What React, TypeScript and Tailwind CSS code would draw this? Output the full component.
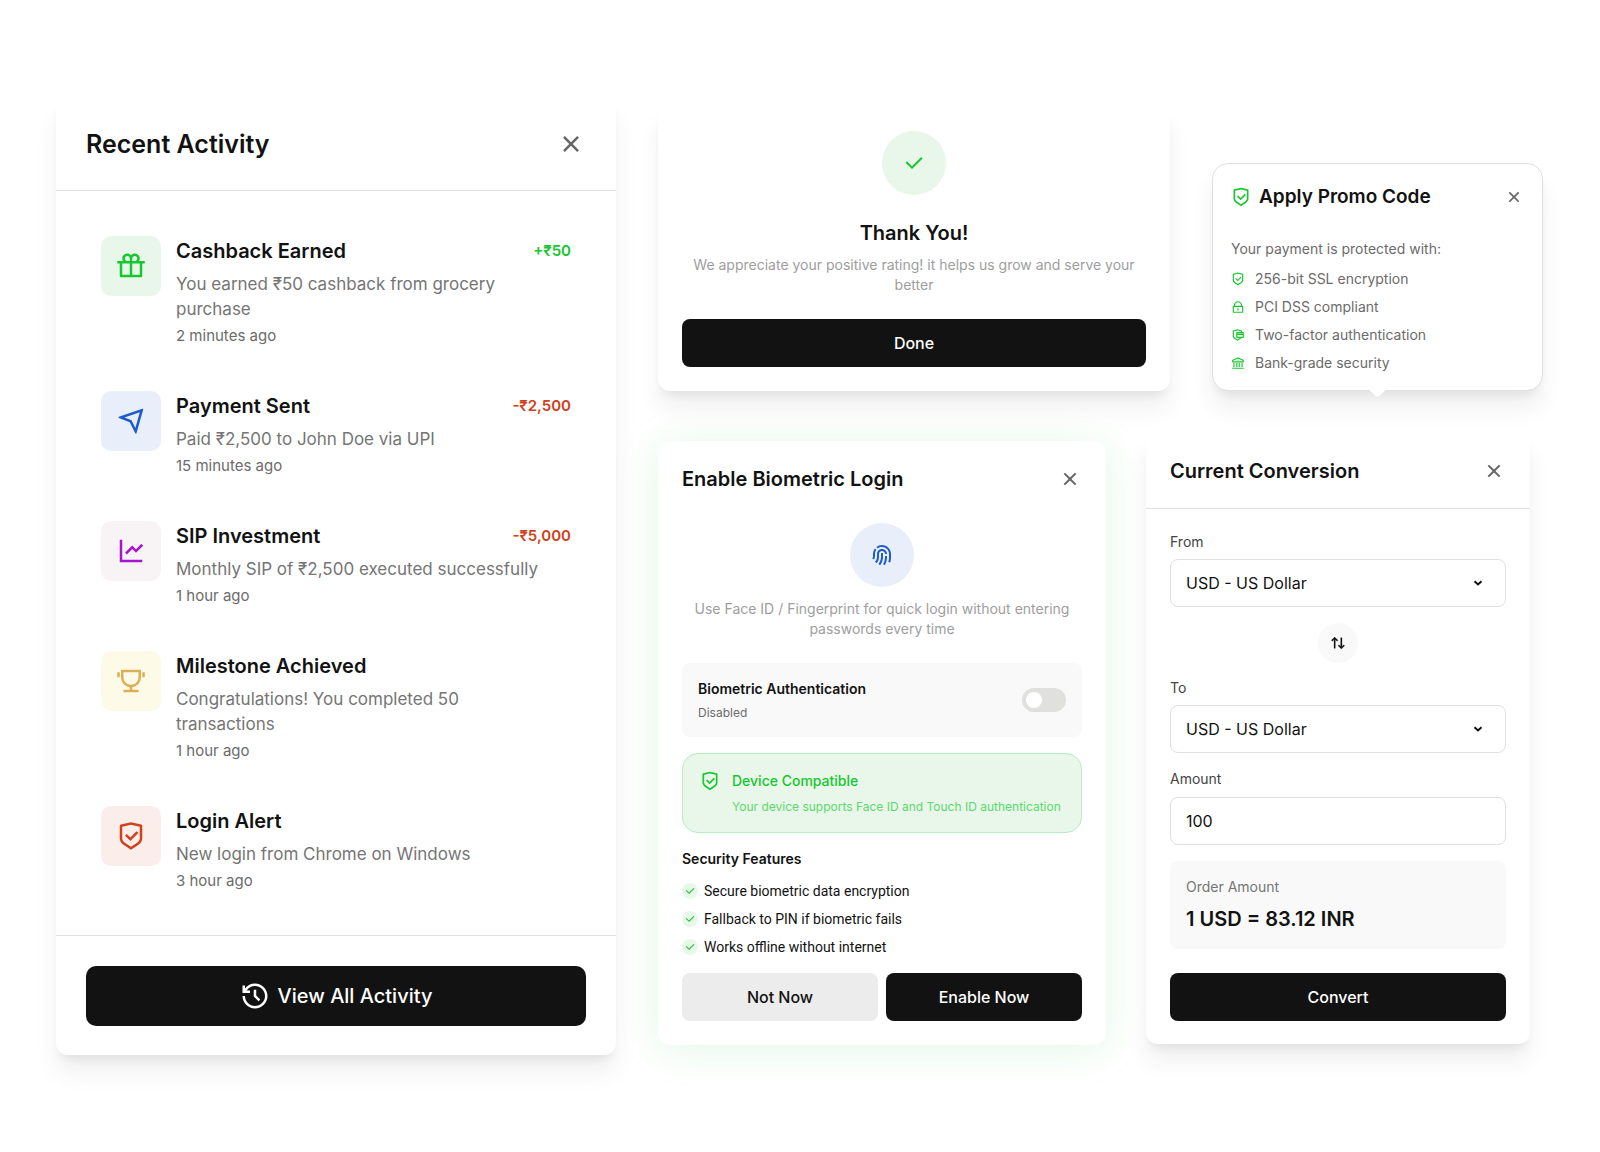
import React, { useState } from "react";
import {
    RiArrowUpDownLine,
    RiBankLine,
    RiCheckLine,
    RiCloseLine,
    RiFingerprintLine,
    RiGiftLine,
    RiHistoryLine,
    RiLineChartLine,
    RiLockLine,
    RiNavigationLine,
    RiSecurePaymentLine,
    RiShieldCheckLine,
    RiTrophyLine,
} from "react-icons/ri";

const activities = [
    {
        title: "Cashback Earned",
        text: "You earned ₹50 cashback from grocery purchase",
        time: "2 minutes ago",
        amount: "+₹50",
        amountColor: "text-[#16c72e]",
        tile: "bg-[#e8f7ea] text-[#16c72e]",
        Icon: RiGiftLine,
    },
    {
        title: "Payment Sent",
        text: "Paid ₹2,500 to John Doe via UPI",
        time: "15 minutes ago",
        amount: "-₹2,500",
        amountColor: "text-[#d0401b]",
        tile: "bg-[#e8effb] text-[#1f5acb] -scale-x-100",
        Icon: RiNavigationLine,
    },
    {
        title: "SIP Investment",
        text: "Monthly SIP of ₹2,500 executed successfully",
        time: "1 hour ago",
        amount: "-₹5,000",
        amountColor: "text-[#d0401b]",
        tile: "bg-[#f8f4f6] text-[#a516d0]",
        Icon: RiLineChartLine,
    },
    {
        title: "Milestone Achieved",
        text: "Congratulations! You completed 50 transactions",
        time: "1 hour ago",
        tile: "bg-[#fdfbe7] text-[#dcae55]",
        Icon: RiTrophyLine,
    },
    {
        title: "Login Alert",
        text: "New login from Chrome on Windows",
        time: "3 hour ago",
        tile: "bg-[#fbede9] text-[#d0401b]",
        Icon: RiShieldCheckLine,
    },
];

const protections = [
    { label: "256-bit SSL encryption", Icon: RiShieldCheckLine },
    { label: "PCI DSS compliant", Icon: RiLockLine },
    { label: "Two-factor authentication", Icon: RiSecurePaymentLine },
    { label: "Bank-grade security", Icon: RiBankLine },
];

const features = [
    "Secure biometric data encryption",
    "Fallback to PIN if biometric fails",
    "Works offline without internet",
];

const cardShadow = "shadow-[0_18px_24px_rgba(0,0,0,0.06),0_8px_10px_-4px_rgba(0,0,0,0.07)]";
const darkButton = "h-12 rounded-lg bg-[#121212] text-base font-medium text-white";

function RecentActivity() {
    return (
        <section className={`min-w-0 rounded-xl bg-white ${cardShadow}`}>
            <header className="flex items-center justify-between border-b border-[#e0e0e0] p-[30px]">
                <h2 className="text-[25px] leading-8 font-semibold">Recent Activity</h2>
                <button aria-label="Close" className="text-[#666666]">
                    <RiCloseLine className="size-[30px]" />
                </button>
            </header>

            <ul className="flex flex-col gap-[15px] p-[30px] pb-[29px]">
                {activities.map(({ title, text, time, amount, amountColor, tile, Icon }) => (
                    <li key={title} className="flex items-start gap-[15px] p-[15px]">
                        <div className={`flex size-[60px] shrink-0 items-center justify-center rounded-[10px] ${tile}`}>
                            <Icon className="size-[30px]" />
                        </div>
                        <div className="min-w-0 flex-1">
                            <div className="flex items-center justify-between">
                                <h3 className="text-xl leading-[30px] font-semibold">{title}</h3>
                                {amount && (
                                    <span className={`text-[15px] leading-5 font-semibold ${amountColor}`}>{amount}</span>
                                )}
                            </div>
                            <p className="mt-1.5 max-w-[370px] text-[17px] leading-[25px] text-[#757575]">{text}</p>
                            <p className="mt-1 text-[15px] leading-5 text-[#6b6b6b]">{time}</p>
                        </div>
                    </li>
                ))}
            </ul>

            <footer className="border-t border-[#e0e0e0] p-[30px] pb-[29px]">
                <button className="flex h-[60px] w-full items-center justify-center gap-2 rounded-[10px] bg-[#121212] text-xl font-medium text-white">
                    <RiHistoryLine className="size-[30px]" />
                    View All Activity
                </button>
            </footer>
        </section>
    );
}

function ThankYou() {
    return (
        <section className={`flex min-w-0 flex-col items-center rounded-xl bg-white p-6 text-center ${cardShadow}`}>
            <div className="flex size-16 items-center justify-center rounded-full bg-[#e8f7ea] text-[#16c72e]">
                <RiCheckLine className="size-6" />
            </div>
            <h2 className="mt-6 text-xl leading-7 font-semibold">Thank You!</h2>
            <p className="mt-2 text-sm leading-5 text-[#9e9e9e]">
                We appreciate your positive rating! it helps us grow and serve your better
            </p>
            <button className={`mt-6 w-full ${darkButton}`}>Done</button>
        </section>
    );
}

function PromoCode() {
    return (
        <section className={`relative min-w-0 rounded-2xl border border-[#e0e0e0] bg-white px-[18px] pt-[19px] pb-[17px] ${cardShadow}`}>
            <header className="flex items-center">
                <RiShieldCheckLine className="size-5 text-[#16c72e]" />
                <h2 className="ml-2 flex-1 text-[19px] leading-7 font-semibold">Apply Promo Code</h2>
                <button aria-label="Close" className="text-[#666666]">
                    <RiCloseLine className="size-5" />
                </button>
            </header>
            <p className="mt-7 text-sm leading-5 text-[#6b6b6b]">Your payment is protected with:</p>
            <ul className="mt-[10px] flex flex-col gap-2">
                {protections.map(({ label, Icon }) => (
                    <li key={label} className="flex items-center gap-2.5 text-sm leading-5 text-[#6b6b6b]">
                        <Icon className="size-3.5 text-[#16c72e]" />
                        {label}
                    </li>
                ))}
            </ul>
            {/* Tooltip pointer */}
            <svg className="absolute top-full left-1/2 -mt-px h-2 w-5 -translate-x-1/2" viewBox="0 0 20 8" fill="white">
                <path d="M0 0h19l-8.300 7.400a2 2 0 0 1-2.400 0z" />
            </svg>
        </section>
    );
}

function BiometricLogin() {
    const [enabled, setEnabled] = useState(false);

    return (
        <section className="mt-2 min-w-0 rounded-xl bg-white p-6 shadow-[0_4px_40px_rgba(22,199,46,0.13)]">
            <header className="flex items-center justify-between">
                <h2 className="text-xl leading-7 font-semibold">Enable Biometric Login</h2>
                <button aria-label="Close" className="text-[#666666]">
                    <RiCloseLine className="size-6" />
                </button>
            </header>

            <div className="mt-[30px] flex flex-col items-center">
                <div className="flex size-16 items-center justify-center rounded-full bg-[#e8effb] text-[#1f5acb]">
                    <RiFingerprintLine className="size-6" />
                </div>
                <p className="mt-3 text-center text-sm leading-5 text-[#9e9e9e]">
                    Use Face ID / Fingerprint for quick login without entering passwords every time
                </p>
            </div>

            <div className="mt-6 flex items-center justify-between rounded-lg bg-[#f9f9f9] p-4">
                <div>
                    <label htmlFor="biometric" className="block text-sm leading-5 font-semibold">
                        Biometric Authentication
                    </label>
                    <p className="mt-1.5 text-xs leading-4 text-[#6b6b6b]">{enabled ? "Enabled" : "Disabled"}</p>
                </div>
                <input
                    id="biometric"
                    type="checkbox"
                    checked={enabled}
                    onChange={(e) => setEnabled(e.target.checked)}
                    className="h-6 w-11 appearance-none rounded-full bg-[#e0e0df] p-1 before:block before:size-4 before:rounded-full before:bg-white checked:bg-[#16c72e] checked:before:ml-5"
                />
            </div>

            <div className="mt-4 flex gap-3 rounded-2xl border border-[#b9ecc1] bg-[#e8f7ea] p-[17px]">
                <RiShieldCheckLine className="size-5 shrink-0 text-[#16c72e]" />
                <div>
                    <h3 className="text-sm leading-5 font-medium text-[#16c72e]">Device Compatible</h3>
                    <p className="mt-2 text-xs leading-4 text-[#5dd96d]">
                        Your device supports Face ID and Touch ID authentication
                    </p>
                </div>
            </div>

            <h3 className="mt-4 text-sm leading-5 font-semibold">Security Features</h3>
            <ul className="mt-3 flex flex-col gap-2">
                {features.map((feature) => (
                    <li key={feature} className="flex items-center gap-1.5 font-[Roboto,sans-serif] text-sm leading-5">
                        <span className="flex size-4 items-center justify-center rounded-full bg-[#e8f7ea] text-[#16c72e]">
                            <RiCheckLine className="size-3" />
                        </span>
                        {feature}
                    </li>
                ))}
            </ul>

            <div className="mt-4 flex gap-2">
                <button className="h-12 flex-1 rounded-lg bg-[#ececec] text-base font-medium">Not Now</button>
                <button className={`flex-1 ${darkButton}`}>Enable Now</button>
            </div>
        </section>
    );
}

function CurrencySelect({ id, label }: { id: string; label: string }) {
    return (
        <div className="flex flex-col gap-2">
            <label htmlFor={id} className="text-sm leading-[18px] text-[#444444]">
                {label}
            </label>
            <div className="relative">
                <select
                    id={id}
                    className="h-12 w-full appearance-none rounded-lg border border-[#e0e0e0] bg-white px-[15px] text-base text-[#121212]"
                >
                    <option>USD - US Dollar</option>
                    <option>INR - Indian Rupee</option>
                </select>
                <svg
                    className="pointer-events-none absolute top-3 right-4 size-6"
                    viewBox="0 0 24 24"
                    fill="none"
                    stroke="#121212"
                    strokeWidth="2"
                >
                    <path d="M8.500 10.200 12 13.500l3.500-3.300" />
                </svg>
            </div>
        </div>
    );
}

function Conversion() {
    const [amount, setAmount] = useState("100");

    return (
        <section className={`min-w-0 rounded-xl bg-white ${cardShadow}`}>
            <header className="flex items-center justify-between border-b border-[#e0e0e0] p-6 pb-[23px]">
                <h2 className="text-xl leading-7 font-semibold">Current Conversion</h2>
                <button aria-label="Close" className="text-[#666666]">
                    <RiCloseLine className="size-6" />
                </button>
            </header>

            <div className="flex flex-col gap-4 p-6 pb-[23px]">
                <CurrencySelect id="from" label="From" />
                <button
                    aria-label="Swap currencies"
                    className="flex size-10 items-center justify-center self-center rounded-full bg-[#f9f9f9]"
                >
                    <RiArrowUpDownLine className="size-4 stroke-[0.4]" />
                </button>
                <CurrencySelect id="to" label="To" />
                <div className="flex flex-col gap-2">
                    <label htmlFor="amount" className="text-sm leading-5 text-[#444444]">
                        Amount
                    </label>
                    <input
                        id="amount"
                        value={amount}
                        onChange={(e) => setAmount(e.target.value)}
                        className="h-12 w-full rounded-lg border border-[#e0e0e0] px-[15px] text-base"
                    />
                </div>
                <div className="rounded-lg bg-[#f9f9f9] p-4">
                    <p className="text-sm leading-5 text-[#757575]">Order Amount</p>
                    <p className="mt-2 text-xl leading-7 font-semibold">1 USD = 83.12 INR</p>
                </div>
                <button className={`mt-2 w-full ${darkButton}`}>Convert</button>
            </div>
        </section>
    );
}

export default function App() {
    return (
        <main className="grid min-h-screen grid-cols-[560fr_885fr] items-start gap-[42px] bg-white pt-[98px] pr-[57px] pb-24 pl-14 font-[Inter,sans-serif] text-[#121212]">
            <RecentActivity />
            <div className="mt-[9px] flex min-w-0 flex-col gap-[42px]">
                <div className="grid grid-cols-[512fr_331fr] items-end gap-[42px]">
                    <ThankYou />
                    <PromoCode />
                </div>
                <div className="grid grid-cols-[448fr_384fr] items-start gap-10 pr-[13px]">
                    <BiometricLogin />
                    <Conversion />
                </div>
            </div>
        </main>
    );
}
